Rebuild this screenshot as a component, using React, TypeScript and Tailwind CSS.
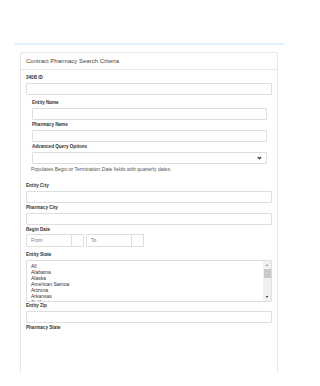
import React from "react";

const states = ["All", "Alabama", "Alaska", "American Samoa", "Arizona", "Arkansas", "California"];

function Label({ children }: { children: React.ReactNode }) {
  return <div className="text-[4.6px] leading-[6px] font-bold text-[#333] mb-[2px]">{children}</div>;
}

function TextInput() {
  return <div className="h-[12px] border border-[#dedede] rounded-[1px] bg-white" />;
}

function Field({ label }: { label: string }) {
  return (
    <div className="mb-[2px]">
      <Label>{label}</Label>
      <TextInput />
    </div>
  );
}

function DateBox({ placeholder }: { placeholder: string }) {
  return (
    <div className="flex h-[13px]">
      <div className="w-[46px] border border-[#dedede] rounded-l-[1px] flex items-center pl-[4px] text-[5px] text-[#777]">
        {placeholder}
      </div>
      <div className="w-[12px] border border-l-0 border-[#dedede] rounded-r-[1px]" />
    </div>
  );
}

export default function App() {
  return (
    <div className="w-[298px] h-[386px] bg-white overflow-hidden font-['Liberation_Sans',Arial,sans-serif] text-[#333]">
      <div className="h-[43px]" />
      <div className="mx-[14px] h-[2px] bg-[#e4f0fa]" />

      {/* Search criteria card */}
      <div className="mx-[20px] mt-[7px] h-[320px] border border-b-0 border-[#e6e6e6] rounded-t-[2px] overflow-hidden">
        <div className="h-[17px] border-b border-[#e6e6e6] px-[5px] flex items-center text-[6px] text-[#444]">
          Contract Pharmacy Search Criteria
        </div>

        <div className="px-[5px] pt-[5px]">
          <Field label="340B ID" />

          <div className="ml-[6px] mr-[5px] pt-[3px]">
            <Field label="Entity Name" />
            <Field label="Pharmacy Name" />
            <div className="mb-[2px]">
              <Label>Advanced Query Options</Label>
              <div className="h-[12px] border border-[#dedede] rounded-[1px] flex items-center justify-end pr-[4px]">
                <svg width="5" height="4" viewBox="0 0 10 8" fill="none">
                  <path d="M1.5 2 L5 5.5 L8.5 2" stroke="#333" strokeWidth="2.2" />
                </svg>
              </div>
            </div>
            <div className="-ml-[1px] text-[5px] leading-[7px] text-[#555] mb-[10px]">
              Populates Begin or Termination Date fields with quarterly dates.
            </div>
          </div>

          <Field label="Entity City" />
          <Field label="Pharmacy City" />

          <div className="mb-[5px]">
            <div className="text-[4.6px] leading-[6px] font-bold text-[#333] mb-[1px]">Begin Date</div>
            <div className="flex gap-[2px]">
              <DateBox placeholder="From" />
              <DateBox placeholder="To" />
            </div>
          </div>

          <div className="mb-[1px]">
            <Label>Entity State</Label>
            <div className="h-[42px] border border-[#dedede] rounded-[1px] flex overflow-hidden">
              <div className="flex-1 pl-[4px] pt-[1.5px] text-[5px] leading-[6.1px] text-[#333] overflow-hidden">
                {states.map((s) => (
                  <div key={s}>{s}</div>
                ))}
              </div>
              <div className="w-[8px] bg-[#f1f1f1] flex flex-col items-center">
                <svg width="4" height="6" viewBox="0 0 8 12" className="mt-[1px]">
                  <path d="M1 8 L4 4 L7 8 Z" fill="#a3a3a3" />
                </svg>
                <div className="w-[7px] h-[9px] bg-[#c9c9c9] mt-[1px]" />
                <div className="flex-1" />
                <svg width="4" height="6" viewBox="0 0 8 12" className="mb-[1px]">
                  <path d="M1 4 L4 8 L7 4 Z" fill="#505050" />
                </svg>
              </div>
            </div>
          </div>

          <Field label="Entity Zip" />
          <Label>Pharmacy State</Label>
        </div>
      </div>
    </div>
  );
}
